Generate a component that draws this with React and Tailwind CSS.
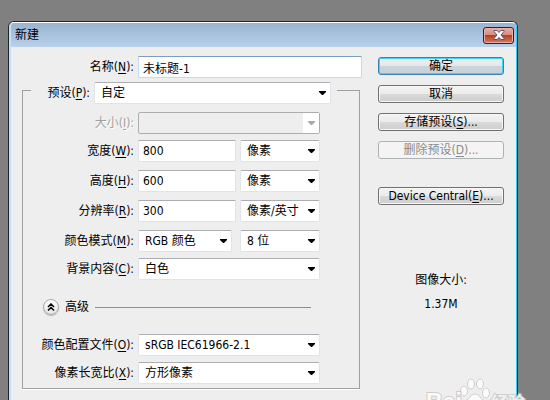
import React, { useState } from 'react';
import clsx from 'clsx';

const Label = ({ htmlFor, text, hotkey, disabled, className }) => (
  <label
    htmlFor={htmlFor}
    className={clsx(
      'shrink-0 text-right whitespace-nowrap',
      disabled && 'text-[#a0a0a0] [text-shadow:1px_1px_0_#fff]',
      className,
    )}
  >
    {text}(<u className="underline-offset-2">{hotkey}</u>):
  </label>
);

const TextField = ({ id, value, wide, ...rest }) => {
  const [text, setText] = useState(value);

  return (
    <input
      id={id}
      type="text"
      value={text}
      onChange={(e) => setText(e.target.value)}
      className={clsx(
        'h-[22px] min-w-0 flex-1 rounded-[1px] border bg-white px-1 outline-none',
        wide
          ? 'border-[#c5daed] border-t-[#7a9ebf]'
          : 'border-[#e2e3ea] border-t-[#abadb3]',
      )}
      {...rest}
    />
  );
};

const Combo = ({ id, options, disabled, className, ...rest }) => (
  <div className={clsx('relative h-[22px] min-w-0', className)}>
    <select
      id={id}
      disabled={disabled}
      className={clsx(
        'block h-full w-full appearance-none rounded-xs border pr-4 pl-1.5 outline-none',
        disabled
          ? 'border-[#adadad] bg-[#eee] opacity-100'
          : 'border-[#e0e3ea] border-t-[#abadb3] bg-white',
      )}
      {...rest}
    >
      {options.map((option) => (
        <option key={option}>{option}</option>
      ))}
    </select>
    <span
      className={clsx(
        'pointer-events-none absolute inset-y-px right-px flex w-4 items-center justify-center',
        disabled ? 'bg-white text-[#a8a8a8]' : 'text-black',
      )}
    >
      <svg width="7" height="4" viewBox="0 0 7 4" fill="currentColor">
        <path d="M0 0h7v1L4 4H3L0 1z" />
      </svg>
    </span>
  </div>
);

const Row = ({ children, ...label }) => (
  <div className="flex items-center gap-1">
    <Label className="w-[111px]" {...label} />
    {children}
  </div>
);

const Button = ({ children, primary, disabled }) => (
  <button
    type="button"
    disabled={disabled}
    className={clsx(
      'flex h-[18px] w-full items-center justify-center rounded-[3px] border whitespace-nowrap',
      primary &&
        'border-[#3c7fb1] bg-[linear-gradient(#eef1f3_0%,#e2e7ea_50%,#cdd5da_50%,#c5d0d8_100%)] shadow-[inset_0_0_0_1px_#43d3f7]',
      disabled && 'border-[#adb2b5] bg-[#f4f4f4] text-[#8a8a8a]',
      !primary &&
        !disabled &&
        'border-[#707070] bg-[linear-gradient(#f3f3f3_0%,#ebebeb_50%,#dadada_50%,#cdcdcd_100%)] shadow-[inset_0_0_0_1px_#f8f8f8]',
    )}
  >
    {children}
  </button>
);

const TitleBar = () => (
  <header className="flex h-6 items-center justify-between bg-linear-to-b from-[#9ab4d1] to-[#b9d1ea] pr-0.5 pl-1">
    <h1>新建</h1>
    <button
      type="button"
      aria-label="关闭"
      className="flex h-[17px] w-[31px] items-center justify-center rounded-[3px] border border-[#4c1220] bg-[linear-gradient(#e9aca2_0%,#d98a7c_48%,#b93d22_48%,#d27a66_100%)] shadow-[inset_0_0_0_1px_#e8b0a6]"
    >
      <svg width="12" height="10" viewBox="0 0 12 10">
        <path
          d="M1 .5h3l2 2 2-2h3v1L8 5l3 3.500v1H8l-2-2-2 2H1v-1L4 5 1 1.500z"
          fill="#fff"
          stroke="#54566b"
        />
      </svg>
    </button>
  </header>
);

const Watermark = () => (
  <svg
    className="pointer-events-none absolute right-5 bottom-0"
    width="104"
    height="24"
    viewBox="0 0 104 24"
    fill="#fafafa"
    stroke="#c4c4c4"
    strokeOpacity="0.8"
    aria-hidden="true"
  >
    <ellipse cx="38" cy="15" rx="3.500" ry="5" />
    <ellipse cx="45" cy="8" rx="3.500" ry="5" />
    <ellipse cx="54" cy="8" rx="3.500" ry="5" />
    <ellipse cx="60" cy="17" rx="3.500" ry="5" />
    <path d="M37 30c0-5 5-6 7-9 2-4 8-4 10 0 2 3 7 4 7 9z" />
    <g
      fontFamily="'Liberation Sans', 'Noto Sans CJK SC', sans-serif"
      fontWeight="bold"
      style={{ paintOrder: 'stroke' }}
      strokeWidth="2"
    >
      <text x="0" y="34" fontSize="23">
        Bai
      </text>
      <text x="65" y="33" fontSize="17" fillOpacity="0.85">
        经验
      </text>
    </g>
  </svg>
);

export default function App() {
  return (
    <div className="relative flex h-screen flex-col overflow-hidden bg-[#808080] pt-[21px] pr-8 pl-2 font-['DejaVu_Sans_Condensed','Noto_Sans_CJK_SC',sans-serif] text-xs text-black">
      <main className="flex-1 rounded-t-md border border-b-0 border-[#202428] bg-[#bcdcf5]">
        <div className="h-full overflow-hidden rounded-t-[5px] border-t border-r border-l-2 border-t-white border-r-[#35cdf2] border-l-[#c5dff5] bg-[#eee]">
          <TitleBar />
          <form className="flex gap-4 pt-[9px] pr-3 pl-[11px]">
            <div className="min-w-0 flex-1">
              <div className="flex items-center gap-1">
                <Label
                  className="w-28"
                  htmlFor="name"
                  text="名称"
                  hotkey="N"
                />
                <TextField id="name" value="未标题-1" wide />
              </div>

              <div className="mt-3 mr-0.5 flow-root border-x border-b border-[#a0a0a0] pb-1 shadow-[0_1px_0_#fff]">
                {/* The preset row sits in the gap of the group's top line */}
                <div className="-mt-2 flex">
                  <span className="mt-2 w-2 border-t border-[#a0a0a0]" />
                  <div className="mr-1.5 flex flex-1 items-center gap-1">
                    <Label
                      className="w-[59px]"
                      htmlFor="preset"
                      text="预设"
                      hotkey="P"
                    />
                    <Combo
                      id="preset"
                      className="flex-1"
                      options={['自定', '剪贴板', '默认 Photoshop 大小']}
                    />
                  </div>
                  <span className="mt-2 w-[22px] border-t border-[#a0a0a0]" />
                </div>

                <div className="mt-2 flex flex-col gap-2 pr-[39px]">
                  <div className="flex flex-col gap-1.5">
                    <Row htmlFor="size" text="大小" hotkey="I" disabled>
                      <Combo
                        id="size"
                        className="flex-1"
                        options={['']}
                        disabled
                      />
                    </Row>
                    <Row htmlFor="width" text="宽度" hotkey="W">
                      <TextField id="width" value="800" />
                      <Combo
                        className="w-20"
                        aria-label="宽度单位"
                        options={['像素', '英寸', '厘米']}
                      />
                    </Row>
                  </div>
                  <Row htmlFor="height" text="高度" hotkey="H">
                    <TextField id="height" value="600" />
                    <Combo
                      className="w-20"
                      aria-label="高度单位"
                      options={['像素', '英寸', '厘米']}
                    />
                  </Row>
                  <Row htmlFor="resolution" text="分辨率" hotkey="R">
                    <TextField id="resolution" value="300" />
                    <Combo
                      className="w-20"
                      aria-label="分辨率单位"
                      options={['像素/英寸', '像素/厘米']}
                    />
                  </Row>
                  <div className="flex flex-col gap-1.5">
                    <Row htmlFor="mode" text="颜色模式" hotkey="M">
                      <div className="flex min-w-0 flex-1 gap-2">
                        <Combo
                          id="mode"
                          className="flex-1"
                          options={['RGB 颜色', '灰度', 'CMYK 颜色']}
                        />
                        <Combo
                          className="w-20"
                          aria-label="位深度"
                          options={['8 位', '16 位', '32 位']}
                        />
                      </div>
                    </Row>
                    <Row htmlFor="background" text="背景内容" hotkey="C">
                      <Combo
                        id="background"
                        className="flex-1"
                        options={['白色', '背景色', '透明']}
                      />
                    </Row>
                  </div>
                </div>

                <div className="flex items-center py-4 pr-12 pl-5">
                  <button
                    type="button"
                    className="flex h-[22px] items-center gap-1.5"
                  >
                    <span className="flex size-4 items-center justify-center rounded-full border border-[#a8a8a8] bg-linear-to-b from-white to-[#e4e4e4] shadow-[0_1px_1px_#bbb]">
                      <svg
                        width="8"
                        height="8"
                        viewBox="0 0 8 8"
                        fill="none"
                        stroke="#000"
                        strokeWidth="1.500"
                      >
                        <path d="M1 4l3-3 3 3M1 7.500l3-3 3 3" />
                      </svg>
                    </span>
                    高级
                  </button>
                  <span className="ml-1.5 flex-1 border-t border-[#8c8c8c]" />
                </div>

                <div className="flex flex-col gap-1.5 pr-[39px]">
                  <Row htmlFor="profile" text="颜色配置文件" hotkey="O">
                    <Combo
                      id="profile"
                      className="flex-1"
                      options={['sRGB IEC61966-2.1', 'Adobe RGB (1998)']}
                    />
                  </Row>
                  <Row htmlFor="aspect" text="像素长宽比" hotkey="X">
                    <Combo
                      id="aspect"
                      className="flex-1"
                      options={['方形像素', 'D1/DV PAL']}
                    />
                  </Row>
                </div>
              </div>
            </div>

            <div className="flex w-[126px] shrink-0 flex-col gap-2.5 pt-px">
              <Button primary>确定</Button>
              <Button>取消</Button>
              <Button>
                存储预设(<u className="underline-offset-2">S</u>)...
              </Button>
              <Button disabled>
                删除预设(<u className="underline-offset-2">D</u>)...
              </Button>
              <div className="mt-[18px]">
                <Button>
                  Device Central(<u className="underline-offset-2">E</u>)...
                </Button>
              </div>
              <div className="mt-[53px] text-center leading-6">
                <p>图像大小:</p>
                <p>1.37M</p>
              </div>
            </div>
          </form>
        </div>
      </main>
      <Watermark />
    </div>
  );
}
